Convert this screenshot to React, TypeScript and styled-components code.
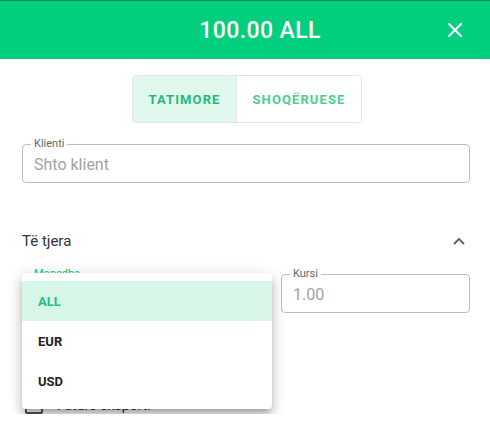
import styled, { createGlobalStyle } from "styled-components"

const GlobalStyle = createGlobalStyle`
  body {
    margin: 0;
    background: #ffffff;
    font-family: Roboto, "Liberation Sans", sans-serif;
    overflow: hidden;
  }
`

const Header = styled.header`
  display: flex;
  align-items: center;
  height: 58px;
  background: #02cf7d;
  border-top: 1px solid #0a8c5a;
  padding: 0 15px 0 16px;
  color: #fff;
`

const Title = styled.div`
  flex: 1;
  text-align: center;
  padding-left: 69px;
  font-size: 23px;
  letter-spacing: 0.4px;
  font-weight: 500;
`

const CloseButton = styled.button`
  width: 40px;
  height: 40px;
  border: none;
  background: transparent;
  display: flex;
  align-items: center;
  justify-content: center;
  padding: 0;
`

const Body = styled.div`
  padding: 16px 20px 0 22px;
  display: flex;
  flex-direction: column;
`

const ToggleGroup = styled.div`
  align-self: center;
  display: flex;
  border: 1px solid #e3e3e3;
  border-radius: 4px;
  overflow: hidden;
  margin-left: 2px;
`

const ToggleButton = styled.button<{ active?: boolean }>`
  height: 46px;
  padding: 0 15.5px;
  border: none;
  border-left: ${p => (p.active ? "none" : "1px solid #e3e3e3")};
  background: ${p => (p.active ? "#e1f8ee" : "#fff")};
  color: ${p => (p.active ? "#27b879" : "#4fcb97")};
  font-family: Roboto, "Liberation Sans", sans-serif;
  font-size: 13px;
  font-weight: 700;
  letter-spacing: 1.1px;
`

const Field = styled.div<{ focused?: boolean }>`
  position: relative;
  height: 39px;
  box-sizing: border-box;
  padding: 0 11px;
  border: 1px solid ${p => (p.focused ? "#02cf7d" : "#bdbdbd")};
  border-radius: 4px;
  display: flex;
  align-items: center;
  min-width: 0;
`

const FieldLabel = styled.span<{ focused?: boolean }>`
  position: absolute;
  top: -7px;
  left: 8px;
  padding: 0 3px;
  background: #fff;
  font-size: 11px;
  line-height: 12px;
  color: ${p => (p.focused ? "#02cf7d" : "#666")};
`

const FieldValue = styled.div`
  font-size: 16px;
  color: #a3a3a3;
  margin-top: 2px;
`

const ClientField = styled(Field)`
  margin-top: 21px;
`

const SectionRow = styled.div`
  display: flex;
  align-items: center;
  justify-content: space-between;
  height: 48px;
  margin-top: 34px;
  font-size: 15px;
  color: #333;
  padding-right: 4px;
`

const FieldsRow = styled.div`
  display: grid;
  grid-template-columns: 250px 1fr;
  gap: 9px;
  margin-top: 9px;
  position: relative;
`

const CheckRow = styled.div`
  display: flex;
  align-items: center;
  gap: 14px;
  margin-top: 83px;
  padding-left: 3px;
  font-size: 14px;
  color: #333;
`

const Checkbox = styled.span`
  width: 14px;
  height: 14px;
  border: 2px solid #555;
  border-radius: 2px;
`

const Menu = styled.ul`
  position: absolute;
  left: 0;
  top: -1px;
  width: 250px;
  margin: 0;
  padding: 8px 0 8px;
  list-style: none;
  background: #fff;
  border-radius: 4px;
  box-shadow: 0 5px 5px -3px rgba(0,0,0,0.2), 0 8px 10px 1px rgba(0,0,0,0.14), 0 3px 14px 2px rgba(0,0,0,0.12);
  z-index: 10;
`

const MenuItem = styled.li<{ selected?: boolean }>`
  height: 40px;
  display: flex;
  align-items: center;
  padding-left: 16px;
  font-size: 13px;
  font-weight: 700;
  background: ${p => (p.selected ? "#d7f6e8" : "transparent")};
  color: ${p => (p.selected ? "#1fc27c" : "#222")};
`

const currencies = ["ALL", "EUR", "USD"]

export default function App() {
  return (
    <>
      <GlobalStyle />
      <Header>
        <Title>100.00 ALL</Title>
        <CloseButton aria-label="close">
          <svg width="16" height="16" viewBox="0 0 16 16">
            <path d="M2 2 L14 14 M14 2 L2 14" stroke="#fff" strokeWidth="2" strokeLinecap="round" />
          </svg>
        </CloseButton>
      </Header>
      <Body>
        <ToggleGroup>
          <ToggleButton active>TATIMORE</ToggleButton>
          <ToggleButton>SHOQËRUESE</ToggleButton>
        </ToggleGroup>

        <ClientField>
          <FieldLabel>Klienti</FieldLabel>
          <FieldValue>Shto klient</FieldValue>
        </ClientField>

        <SectionRow>
          <span>Të tjera</span>
          <svg width="14" height="10" viewBox="0 0 14 10">
            <path d="M2 8 L7 3 L12 8" stroke="#666" strokeWidth="2" fill="none" />
          </svg>
        </SectionRow>

        <FieldsRow>
          <Field focused>
            <FieldLabel focused>Monedha</FieldLabel>
            <FieldValue>ALL</FieldValue>
          </Field>
          <Field>
            <FieldLabel>Kursi</FieldLabel>
            <FieldValue>1.00</FieldValue>
          </Field>
          <Menu>
            {currencies.map(c => (
              <MenuItem key={c} selected={c === "ALL"}>{c}</MenuItem>
            ))}
          </Menu>
        </FieldsRow>

        <CheckRow>
          <Checkbox />
          <span>Faturë eksporti</span>
        </CheckRow>
      </Body>
    </>
  )
}
